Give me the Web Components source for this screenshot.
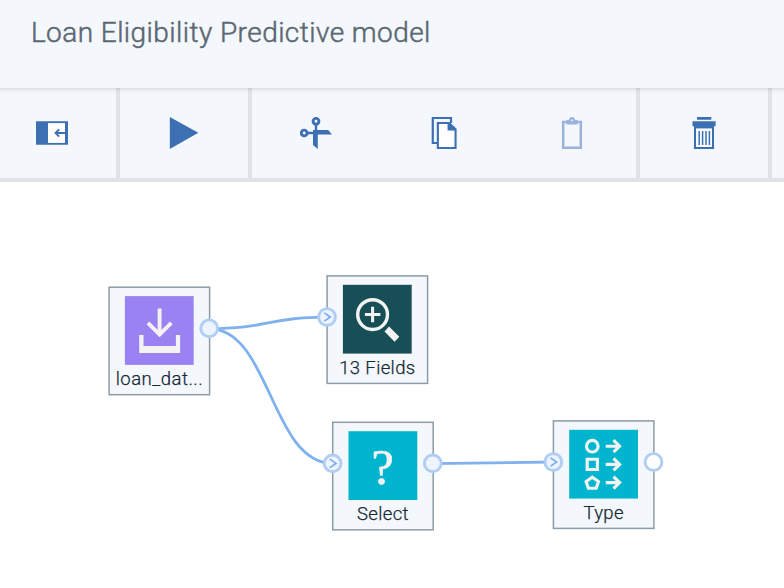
<!DOCTYPE html>
<html lang="en">
<head>
<meta charset="utf-8">
<title>Loan Eligibility Predictive model</title>
<style>
html,body{margin:0;height:100%;overflow:hidden;background:#fff}
body{font-family:Roboto,"Noto Sans",sans-serif}
</style>
</head>
<body>
<flow-app></flow-app>
<script>
const define = (name, markup, setup) => {
  const tpl = document.createElement('template');
  tpl.innerHTML = markup;
  customElements.define(name, class extends HTMLElement {
    connectedCallback() {
      if (this.shadowRoot) return;
      const root = this.attachShadow({mode: 'open'});
      root.append(tpl.content.cloneNode(true));
      if (setup) setup(this, root);
    }
  });
};

/* Toolbar icons on a 32x32 grid */
const toolIcons = {
  panel: '<path fill-rule="evenodd" d="M0 4.2H32V27.8H0ZM12 6.3V25.7H29V6.3Z"/><path fill="#fff" d="M12 6.3H29V25.7H12Z"/><path d="M29.5 16H19.6M23.2 12.3L19.5 16L23.2 19.7" fill="none" stroke="currentColor" stroke-width="1.9"/>',
  play: '<path d="M1.8 0L30.3 15.8L1.8 32Z"/>',
  cut: '<g fill="none" stroke="currentColor" stroke-width="2.9"><circle cx="16" cy="4.3" r="2.9"/><circle cx="4.2" cy="16" r="2.9"/></g><path d="M14.8 7.2H17.2V13H28.2L32 17.6H17.8V32L13 28V17.2H7.2V14.8H13V13H14.8Z"/>',
  copy: '<path d="M9 26H4.8V1H23V6" fill="none" stroke="currentColor" stroke-width="2.2"/><path fill="#fff" d="M10 7H19V14H27V30H10Z"/><path fill-rule="evenodd" d="M8.8 5H21.5L28.6 11.7V32H8.8ZM10.9 7.1V29.9H26.5V13.5H19.6V7.1Z"/>',
  paste: '<path d="M7.2 5V30.8H24.8V5Z" fill="none" stroke="currentColor" stroke-width="2.5"/><path fill-rule="evenodd" d="M10.5 3H12.8C13.2 1 14.4 0 16 0S18.8 1 19.2 3H21.5V7.5H10.5ZM16 2.4A1.2 1.2 0 0 0 16 4.8A1.2 1.2 0 0 0 16 2.4"/>',
  trash: '<path d="M9 0H23.3V2.8H9ZM4.5 4.2H27.6V9.3H26V32H6V9.3H4.5Z"/><path fill="#f8fbff" d="M8 11.4H24V30H8Z"/><path d="M11.2 14V28M14.6 14V28M18 14V28M21.4 14V28" fill="none" stroke="currentColor" stroke-width="1.5"/>'
};
define('tool-button', `
<style>
:host{display:flex;align-items:center;justify-content:center;width:var(--w,128px);height:90px;color:#3d70b2;box-sizing:border-box}
:host([disabled]){color:#99b3db}
svg{width:32px;height:32px;display:block;fill:currentColor}
</style><svg viewBox="0 0 32 32" aria-hidden="true"></svg>`,
(el, root) => { root.querySelector('svg').innerHTML = toolIcons[el.getAttribute('icon')]; });

define('tool-group', `
<style>
:host{display:flex;flex:none;box-sizing:border-box;border-right:4px solid #dfe3e6}
</style><slot></slot>`);

define('flow-toolbar', `
<style>
:host{display:flex;height:94px;box-sizing:border-box;border-bottom:4px solid #dfe3e6;background:#f4f7fc;position:relative}
:host::after{content:"";position:absolute;left:0;right:0;top:0;height:6px;background:linear-gradient(#0000001a,#00000008 3px,#0000)}
</style><slot></slot>`);

define('page-header', `
<style>
:host{display:block;height:88px;box-sizing:border-box;background:#f4f7fc;padding:8px 0 0 30px}
svg{display:block;overflow:visible}
text{font-size:28px;font-weight:300;fill:#5a6872;stroke:#5a6872;stroke-width:.5px}
</style><svg width="410" height="50"><text x=".9" y="34" textLength="399.5" lengthAdjust="spacing"></text></svg>`,
(el, root) => { root.querySelector('text').textContent = el.getAttribute('heading'); });

/* Node pictograms on the 69x69 tile */
const glyphs = {
  download: '<path d="M34.7 12.5V37M23 26.7L34.7 38.5L46.4 26.7" stroke-width="3.9"/><path fill="#f3f3f3" stroke="none" d="M14.3 39H18.6V50H51V39H55.2V57H14.3Z"/>',
  zoom: '<circle cx="29.7" cy="29.8" r="14.9" stroke-width="3.4"/><path d="M22 29.8H37.5M29.7 22V37.4" stroke-width="3"/><path fill="#f3f3f3" stroke="none" d="M46.2 41.7L56.4 51.9L51.7 57L41.6 46.8Z"/>',
  question: '<text x="34" y="53" text-anchor="middle">?</text>',
  types: '<g stroke-width="3.1"><circle cx="23.1" cy="16.4" r="5.8"/><path d="M18 29.5H28.2V39.7H18ZM23.1 47.4L29.3 51.8L27 58.4H19.2L16.9 51.8Z"/><path d="M36.5 16.4H50M44.3 10.4L50.4 16.4L44.3 22.4M36.5 34.6H50M44.3 28.6L50.4 34.6L44.3 40.6M36.5 52.8H50M44.3 46.8L50.4 52.8L44.3 58.8"/></g>'
};
/* x and y are canvas coordinates */
define('flow-node', `
<style>
:host{position:absolute;left:0;top:0;display:block;width:102px;height:109px}
svg{display:block;overflow:visible}
.frame{fill:#f4f7fc;stroke:#8e9ca7;stroke-width:1.5}
.glyph{fill:none;stroke:#f3f3f3}
.glyph text{fill:#f3f3f3;stroke:#f3f3f3;stroke-width:.7px;font:50px "Liberation Serif",serif}
.label{font-size:18.5px;font-weight:300;fill:#152934;stroke:#152934;stroke-width:.25px}
.port circle{fill:#edf4ff;stroke:#b0cdf3;stroke-width:2.9}
.port path{fill:none;stroke:#78abed;stroke-width:1.6}
.empty circle{fill:#fff}
</style>
<svg width="102" height="109">
<rect class="frame" x=".9" y=".9" width="100.5" height="107.5"/>
<rect class="tile" x="16.7" y="9.8" width="68.8" height="68.8"/>
<g class="glyph" transform="translate(16.7 9.8)"></g>
<text class="label" y="98.6" lengthAdjust="spacing"></text>
<g class="port in" transform="translate(.8 42)"><circle r="8.4"/><path d="M-2.7 -4.2L3.4 0L-2.7 4.2"/></g>
<g class="port out" transform="translate(101 42)"><circle r="8.4"/></g>
</svg>`,
(el, root) => {
  const a = n => el.getAttribute(n), q = s => root.querySelector(s);
  el.style.transform = `translate(${a('x')}px,${a('y')}px)`;
  q('.tile').setAttribute('fill', a('color'));
  q('.glyph').innerHTML = glyphs[a('icon')];
  const t = q('.label'), w = +a('label-width');
  t.textContent = a('label');
  t.setAttribute('textLength', w);
  t.setAttribute('x', 51 - w / 2);
  if (!a('ports').includes('in')) q('.in').remove();
  if (!a('ports').includes('out')) q('.out').remove();
  else if (a('ports').includes('empty')) q('.out').classList.add('empty');
});

define('flow-canvas', `
<style>
:host{display:block;position:relative;height:406px;background:#fff;overflow:hidden}
svg{display:block;fill:none;stroke:#7fb1ee;stroke-width:2.8}
</style>
<svg width="784" height="406" viewBox="0 182 784 406">
<path d="M209 328.7C268 328.7 268 317.2 327 317.2M209 328.7C270.5 328.7 271 463.5 332.7 463.5M433 463.7L553 462"/>
</svg><slot></slot>`);

define('flow-app', `
<style>:host{display:flex;flex-direction:column;width:784px;height:588px;overflow:hidden}</style>
<page-header heading="Loan Eligibility Predictive model"></page-header>
<flow-toolbar>
<tool-group><tool-button icon="panel" style="--w:116px;padding-right:12px"></tool-button></tool-group>
<tool-group><tool-button icon="play"></tool-button></tool-group>
<tool-group><tool-button icon="cut"></tool-button><tool-button icon="copy"></tool-button><tool-button icon="paste" disabled></tool-button></tool-group>
<tool-group><tool-button icon="trash"></tool-button></tool-group>
</flow-toolbar>
<flow-canvas>
<flow-node x="108.2" y="104.3" color="#9b82f3" icon="download" label="loan_dat..." label-width="87" ports="out"></flow-node>
<flow-node x="326.2" y="93" color="#184f56" icon="zoom" label="13 Fields" label-width="76" ports="in"></flow-node>
<flow-node x="331.8" y="239.4" color="#00b5cd" icon="question" label="Select" label-width="51.5" ports="in out"></flow-node>
<flow-node x="552.5" y="238" color="#00b5cd" icon="types" label="Type" label-width="40" ports="in out empty"></flow-node>
</flow-canvas>`);
</script>
</body>
</html>
